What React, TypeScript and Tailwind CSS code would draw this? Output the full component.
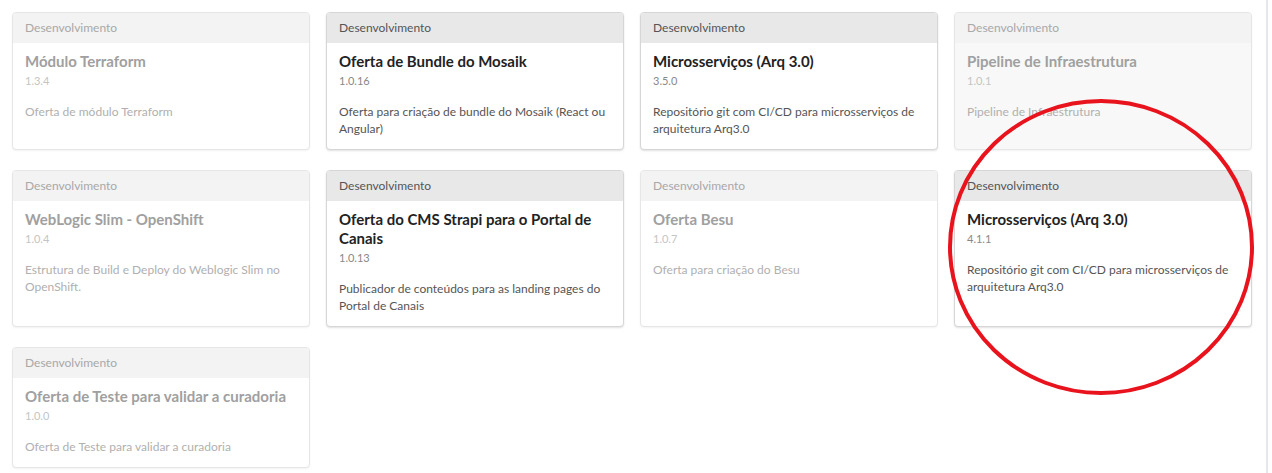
import React from "react";

type Card = {
  title: string;
  version: string;
  desc: string;
  enabled: boolean;
  greyBody?: boolean;
};

const cards: Card[] = [
  { title: "Módulo Terraform", version: "1.3.4", desc: "Oferta de módulo Terraform", enabled: false },
  { title: "Oferta de Bundle do Mosaik", version: "1.0.16", desc: "Oferta para criação de bundle do Mosaik (React ou Angular)", enabled: true },
  { title: "Microsserviços (Arq 3.0)", version: "3.5.0", desc: "Repositório git com CI/CD para microsserviços de arquitetura Arq3.0", enabled: true },
  { title: "Pipeline de Infraestrutura", version: "1.0.1", desc: "Pipeline de Infraestrutura", enabled: false, greyBody: true },
  { title: "WebLogic Slim - OpenShift", version: "1.0.4", desc: "Estrutura de Build e Deploy do Weblogic Slim no OpenShift.", enabled: false },
  { title: "Oferta do CMS Strapi para o Portal de Canais", version: "1.0.13", desc: "Publicador de conteúdos para as landing pages do Portal de Canais", enabled: true },
  { title: "Oferta Besu", version: "1.0.7", desc: "Oferta para criação do Besu", enabled: false },
  { title: "Microsserviços (Arq 3.0)", version: "4.1.1", desc: "Repositório git com CI/CD para microsserviços de arquitetura Arq3.0", enabled: true },
  { title: "Oferta de Teste para validar a curadoria", version: "1.0.0", desc: "Oferta de Teste para validar a curadoria", enabled: false },
];

function OfferCard({ c }: { c: Card }) {
  if (c.enabled) {
    return (
      <div className="flex flex-col rounded-[4px] border border-[#d6d6d6] bg-white shadow-[0_1px_2px_rgba(0,0,0,0.12)] overflow-hidden">
        <div className="h-[30px] bg-[#e8e8e8] px-3 flex items-center text-[12px] text-[#555555]">Desenvolvimento</div>
        <div className="flex-1 px-3 pt-[9px] pb-3">
          <div className="text-[15px] leading-[19px] font-bold text-[#222222]">{c.title}</div>
          <div className="mt-[2px] text-[11px] leading-[16px] text-[#888888]">{c.version}</div>
          <div className="mt-[14px] text-[12px] leading-[17px] text-[#555555]">{c.desc}</div>
        </div>
      </div>
    );
  }
  return (
    <div className={"flex flex-col rounded-[4px] border border-[#e6e6e6] shadow-[0_1px_2px_rgba(0,0,0,0.05)] overflow-hidden " + (c.greyBody ? "bg-[#f8f8f8]" : "bg-white")}>
      <div className="h-[30px] bg-[#f3f3f3] px-3 flex items-center text-[12px] text-[#a8a8a8]">Desenvolvimento</div>
      <div className="flex-1 px-3 pt-[9px] pb-3">
        <div className="text-[15px] leading-[19px] font-bold text-[#a0a0a0]">{c.title}</div>
        <div className="mt-[2px] text-[11px] leading-[16px] text-[#c4c4c4]">{c.version}</div>
        <div className="mt-[14px] text-[12px] leading-[17px] text-[#b0b0b0]">{c.desc}</div>
      </div>
    </div>
  );
}

export default function App() {
  return (
    <div className="relative flex h-[473px] w-[1272px] bg-white overflow-hidden" style={{ fontFamily: "Lato, 'Noto Sans', sans-serif" }}>
      <div className="w-[1266px] pl-3 pr-[14px] pt-3">
        <div className="grid grid-cols-4 gap-x-4 gap-y-5">
          {cards.map((c, i) => (
            <OfferCard key={i} c={c} />
          ))}
        </div>
      </div>
      <div className="w-[2px] h-full bg-[#e4e8ee]" />
      <svg className="absolute left-0 top-0 pointer-events-none" width="1272" height="473" viewBox="0 0 1272 473">
        <ellipse cx="1101" cy="247" rx="151" ry="146" fill="none" stroke="#e8131c" strokeWidth="4" />
      </svg>
    </div>
  );
}
